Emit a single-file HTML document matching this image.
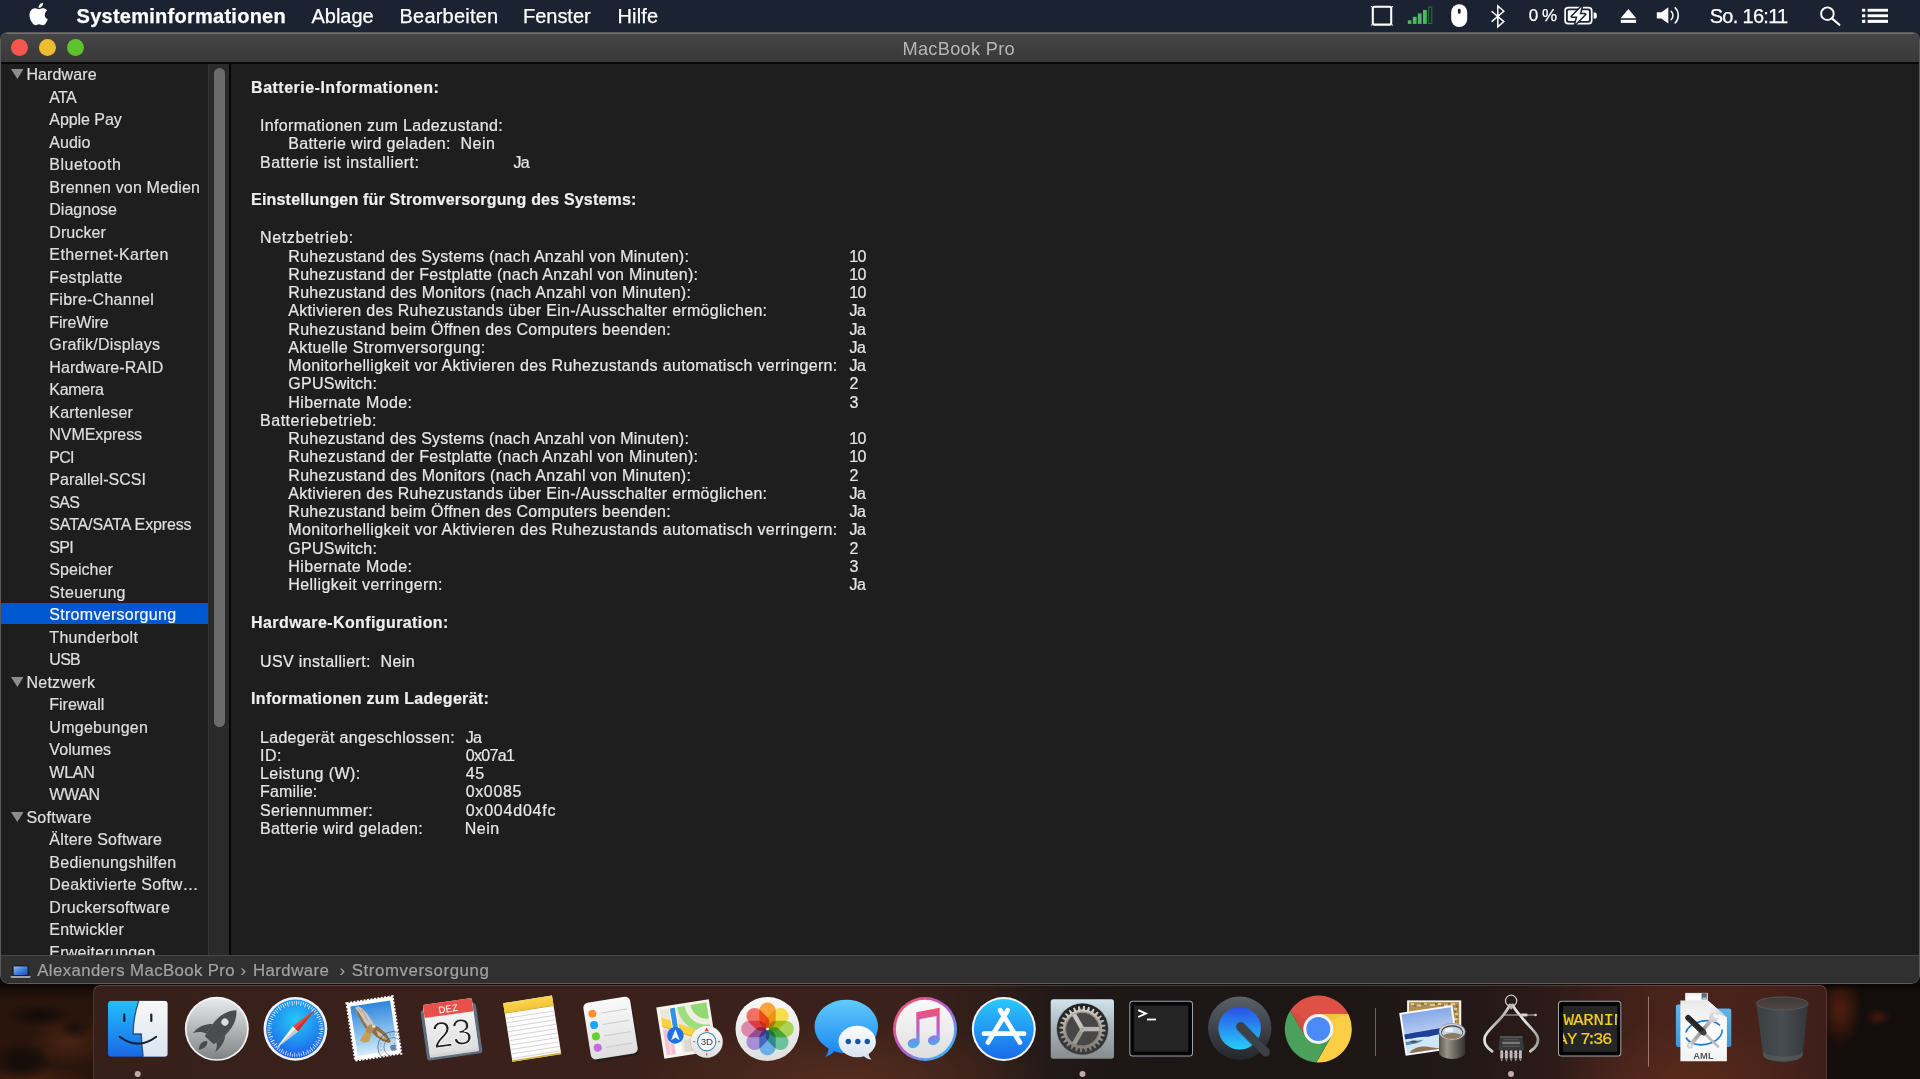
<!DOCTYPE html><html><head><meta charset="utf-8"><title>Systeminformationen</title><style>
*{margin:0;padding:0;box-sizing:border-box}
html,body{width:1920px;height:1079px;overflow:hidden;background:#140b08;font-family:"Liberation Sans",sans-serif;}
.abs{position:absolute}
.t{position:absolute;white-space:pre;line-height:1;}
#menubar{position:absolute;left:0;top:0;width:1920px;height:33px;background:#1b2231;border-bottom:1px solid #182030}
#menubar .t{color:#fff;-webkit-text-stroke:.25px #fff}
#win{position:absolute;left:1px;top:33px;width:1918px;height:950px;border-radius:7px 7px 8px 8px;background:#1e1e1e;overflow:hidden;box-shadow:0 0 0 1px #5a5a5a}
#titlebar{position:absolute;left:0;top:0;width:100%;height:29px;background:linear-gradient(#464646,#404040 40%,#393939);border-top:1px solid #727272}
#tbline{position:absolute;left:0;top:29px;width:100%;height:2px;background:#070707}
.tl{position:absolute;width:17px;height:17px;border-radius:50%;top:6.400px}
#side{position:absolute;left:0;top:31px;width:207px;height:891px;background:#1e1e1e;overflow:hidden}
#side .t{color:#dedede;-webkit-text-stroke:.22px #dedede}
#track{position:absolute;left:207px;top:31px;width:21px;height:891px;background:#2a2a2a;border-left:1px solid #363636}
#thumb{position:absolute;left:212.800px;top:35px;width:11.200px;height:658.500px;border-radius:6px;background:#6b6b6b}
#divider{position:absolute;left:228px;top:31px;width:2px;height:891px;background:#050505}
#main .t{color:#e6e6e6;-webkit-text-stroke:.22px #e6e6e6}
#status{position:absolute;left:0;top:922px;width:100%;height:28px;background:#303030;border-top:1px solid #474747}
#status .t{color:#a2a2a2;-webkit-text-stroke:.2px #a2a2a2}
#dock{position:absolute;left:93px;top:985px;width:1734px;height:110px;border-radius:7px 7px 0 0;background:radial-gradient(ellipse 210px 60px at 750px 96px,rgba(92,48,30,.75),transparent),radial-gradient(ellipse 130px 60px at 1590px 96px,rgba(98,46,28,.6),transparent),linear-gradient(90deg,#38201a 0,#3b211b 35%,#3a211b 47%,#2e1d19 52%,#211917 55.500%,#1d1716 59%,#1c1615 70%,#211817 78%,#2c1b18 84%,#40201a 88%,#4a241a 91.500%,#47221a 96%,#3e1f1a 100%);box-shadow:inset 0 1px 0 rgba(255,255,255,.16),inset 1px 0 0 rgba(255,255,255,.1),inset -1px 0 0 rgba(255,255,255,.1)}
</style></head><body>
<div class="abs" id="wpl" style="left:0;top:983px;width:94px;height:96px;background:linear-gradient(#0b0604 0,rgba(11,6,4,0) 16px),radial-gradient(ellipse 34px 12px at 38px 32px,#120a07,transparent),radial-gradient(ellipse 30px 20px at 22px 78px,#160d09 30%,transparent),radial-gradient(ellipse 18px 12px at 75px 45px,#1a0f0a,transparent),radial-gradient(ellipse 40px 26px at 68px 58px,#4a2413,transparent),radial-gradient(ellipse 60px 14px at 30px 96px,#47210f,transparent),#29150c"></div>
<div class="abs" id="wpr" style="left:1826px;top:983px;width:94px;height:96px;background:linear-gradient(#080504 0,rgba(8,5,4,0) 8px),radial-gradient(ellipse 22px 38px at 14px 26px,#4a1c0e 15%,transparent),radial-gradient(ellipse 14px 9px at 52px 34px,#40190c,transparent),#130d0b"></div>
<div class="abs" style="left:0;top:0;width:1920px;height:46px;background:#1b2231"></div>
<div id="menubar">
<div class="t" style="left:76.60px;top:6.00px;font-size:20px;letter-spacing:0.257px;font-weight:700;">Systeminformationen</div>
<div class="t" style="left:311.50px;top:6.00px;font-size:20px;letter-spacing:-0.030px;">Ablage</div>
<div class="t" style="left:399.50px;top:6.00px;font-size:20px;letter-spacing:0.209px;">Bearbeiten</div>
<div class="t" style="left:523.00px;top:6.00px;font-size:20px;letter-spacing:-0.024px;">Fenster</div>
<div class="t" style="left:617.50px;top:6.00px;font-size:20px;letter-spacing:0.153px;">Hilfe</div>
<div class="t" style="left:1528.70px;top:7.00px;font-size:17px;letter-spacing:-0.489px;">0 %</div>
<div class="t" style="left:1709.70px;top:6.00px;font-size:20px;letter-spacing:-0.700px;">So. 16:11</div>
<svg class="abs" style="left:0;top:0" width="1920" height="32" viewBox="0 0 1920 32">
<g transform="translate(27.46,2.8) scale(0.933)"><path fill="#fff" d="M12.152 6.896c-.948 0-2.415-1.078-3.96-1.04-2.04.027-3.91 1.183-4.961 3.014-2.117 3.675-.546 9.103 1.519 12.09 1.013 1.454 2.208 3.09 3.792 3.039 1.52-.065 2.09-.987 3.935-.987 1.831 0 2.35.987 3.96.948 1.637-.026 2.676-1.48 3.676-2.948 1.156-1.688 1.636-3.325 1.662-3.415-.039-.013-3.182-1.221-3.22-4.857-.026-3.04 2.48-4.494 2.597-4.559-1.429-2.09-3.623-2.324-4.39-2.376-2-.156-3.675 1.09-4.61 1.09zM15.53 3.83c.843-1.012 1.4-2.427 1.245-3.83-1.207.052-2.662.805-3.532 1.818-.78.896-1.454 2.338-1.273 3.714 1.338.104 2.715-.688 3.559-1.701"/></g>
<!-- display square -->
<rect x="1372.8" y="6.8" width="18.4" height="17.8" rx="1.5" fill="none" stroke="#fff" stroke-width="2.1"/>
<path d="M1371.6 6v1.2M1392.4 6v1.2M1371.6 24.4v1.2M1392.4 24.4v1.2" stroke="#fff" stroke-width="1.4"/>
<!-- signal bars -->
<g fill="#4cb866"><rect x="1407.8" y="20.3" width="3.6" height="3.6"/><rect x="1412.8" y="16.8" width="3.8" height="7.1"/><rect x="1417.8" y="13.4" width="3.8" height="10.5"/><rect x="1423" y="9.9" width="3.8" height="14"/></g>
<rect x="1428.7" y="7" width="3.1" height="16.5" fill="none" stroke="#2f7a45" stroke-width="0.9"/>
<!-- mouse -->
<rect x="1451.2" y="4.2" width="16" height="22.8" rx="8" fill="#fff"/>
<rect x="1457.9" y="8.8" width="2.7" height="5" rx="1.2" fill="#1b2130"/>
<!-- bluetooth -->
<path d="M1491.6 11.2L1503.8 21.6L1497.8 26.8V5.9L1503.8 11.2L1491.6 21.6" fill="none" stroke="#fff" stroke-width="1.5" stroke-linejoin="miter"/>
<!-- battery -->
<rect x="1565.1" y="7.6" width="26.6" height="16" rx="3.2" fill="none" stroke="#fff" stroke-width="1.7"/>
<path d="M1593.6 12.4h1.2a2 2 0 0 1 2 2v2.4a2 2 0 0 1-2 2h-1.2z" fill="#fff"/>
<rect x="1567.8" y="10.3" width="21.2" height="10.6" rx="1.2" fill="#fff"/>
<path d="M1581.600 6.800L1572 16.600h5.400L1575.400 24L1585 14.300h-5.400z" fill="#fff" stroke="#1b2231" stroke-width="3" stroke-linejoin="round"/>
<path d="M1581.600 6.800L1572 16.600h5.400L1575.400 24L1585 14.300h-5.400z" fill="#fff"/>
<!-- eject -->
<path d="M1628.4 9L1636.2 18.2H1620.6z" fill="#fff"/><rect x="1620.8" y="19.8" width="15.3" height="3.1" fill="#fff"/>
<!-- speaker -->
<path d="M1656.8 12.2h4.6l6.9-5v16.4l-6.9-5h-4.6z" fill="#fff"/>
<path d="M1671.2 11.2a6 6 0 0 1 0 8.4" fill="none" stroke="#fff" stroke-width="1.5" stroke-linecap="round"/>
<path d="M1675.2 7.8a11 11 0 0 1 0 15.2" fill="none" stroke="#fff" stroke-width="1.5" stroke-linecap="round"/>
<!-- search -->
<circle cx="1827.4" cy="13.7" r="6.3" fill="none" stroke="#fff" stroke-width="1.9"/><path d="M1831.9 18.4L1839.4 24.8" stroke="#fff" stroke-width="2.1" stroke-linecap="round"/>
<!-- list -->
<g fill="#fff"><rect x="1862" y="8.8" width="3.3" height="2.9"/><rect x="1867.6" y="8.8" width="20.4" height="2.9"/><rect x="1862" y="14.3" width="3.3" height="2.9"/><rect x="1867.6" y="14.3" width="20.4" height="2.9"/><rect x="1862" y="19.8" width="3.3" height="3.1"/><rect x="1867.6" y="19.8" width="20.4" height="3.1"/></g>
</svg>

</div>
<div id="win">
<div id="titlebar"></div><div id="tbline"></div>
<div class="tl" style="left:10px;background:#f5564f"></div>
<div class="tl" style="left:38px;background:#ebbd30"></div>
<div class="tl" style="left:66px;background:#5ec22f"></div>
<div class="t" style="left:901.50px;top:7.00px;font-size:18.2px;letter-spacing:0.295px;color:#b6b6b6;">MacBook Pro</div>
<div id="side">
<svg class="abs" style="left:9.60px;top:5.20px" width="12.6" height="10" viewBox="0 0 12.6 10"><path d="M0 0H12.6L6.3 10Z" fill="#8c8c8c"/></svg>
<div class="t" style="left:25.40px;top:3.00px;font-size:16px;letter-spacing:0.120px;">Hardware</div>
<div class="t" style="left:48.30px;top:26.00px;font-size:16px;letter-spacing:-0.700px;">ATA</div>
<div class="t" style="left:48.30px;top:48.00px;font-size:16px;letter-spacing:-0.055px;">Apple Pay</div>
<div class="t" style="left:48.30px;top:71.00px;font-size:16px;letter-spacing:0.019px;">Audio</div>
<div class="t" style="left:48.30px;top:93.00px;font-size:16px;letter-spacing:0.486px;">Bluetooth</div>
<div class="t" style="left:48.30px;top:116.00px;font-size:16px;letter-spacing:0.179px;">Brennen von Medien</div>
<div class="t" style="left:48.30px;top:138.00px;font-size:16px;letter-spacing:0.014px;">Diagnose</div>
<div class="t" style="left:48.30px;top:161.00px;font-size:16px;letter-spacing:0.087px;">Drucker</div>
<div class="t" style="left:48.30px;top:183.00px;font-size:16px;letter-spacing:0.432px;">Ethernet-Karten</div>
<div class="t" style="left:48.30px;top:206.00px;font-size:16px;letter-spacing:0.327px;">Festplatte</div>
<div class="t" style="left:48.30px;top:228.00px;font-size:16px;letter-spacing:0.256px;">Fibre-Channel</div>
<div class="t" style="left:48.30px;top:251.00px;font-size:16px;letter-spacing:-0.163px;">FireWire</div>
<div class="t" style="left:48.30px;top:273.00px;font-size:16px;letter-spacing:0.216px;">Grafik/Displays</div>
<div class="t" style="left:48.30px;top:296.00px;font-size:16px;letter-spacing:0.087px;">Hardware-RAID</div>
<div class="t" style="left:48.30px;top:318.00px;font-size:16px;letter-spacing:-0.285px;">Kamera</div>
<div class="t" style="left:48.30px;top:341.00px;font-size:16px;letter-spacing:0.171px;">Kartenleser</div>
<div class="t" style="left:48.30px;top:363.00px;font-size:16px;letter-spacing:-0.061px;">NVMExpress</div>
<div class="t" style="left:48.30px;top:386.00px;font-size:16px;letter-spacing:-0.700px;">PCI</div>
<div class="t" style="left:48.30px;top:408.00px;font-size:16px;letter-spacing:0.060px;">Parallel-SCSI</div>
<div class="t" style="left:48.30px;top:431.00px;font-size:16px;letter-spacing:-0.700px;">SAS</div>
<div class="t" style="left:48.30px;top:453.00px;font-size:16px;letter-spacing:-0.151px;">SATA/SATA Express</div>
<div class="t" style="left:48.30px;top:476.00px;font-size:16px;letter-spacing:-0.672px;">SPI</div>
<div class="t" style="left:48.30px;top:498.00px;font-size:16px;letter-spacing:0.054px;">Speicher</div>
<div class="t" style="left:48.30px;top:521.00px;font-size:16px;letter-spacing:0.295px;">Steuerung</div>
<div class="abs" style="left:0;top:539px;width:207px;height:21px;background:#0058d0"></div>
<div class="t" style="left:48.30px;top:543.00px;font-size:16px;letter-spacing:0.291px;color:#fff;">Stromversorgung</div>
<div class="t" style="left:48.30px;top:566.00px;font-size:16px;letter-spacing:0.325px;">Thunderbolt</div>
<div class="t" style="left:48.30px;top:588.00px;font-size:16px;letter-spacing:-0.700px;">USB</div>
<svg class="abs" style="left:9.60px;top:612.70px" width="12.6" height="10" viewBox="0 0 12.6 10"><path d="M0 0H12.6L6.3 10Z" fill="#8c8c8c"/></svg>
<div class="t" style="left:25.40px;top:611.00px;font-size:16px;letter-spacing:0.274px;">Netzwerk</div>
<div class="t" style="left:48.30px;top:633.00px;font-size:16px;letter-spacing:-0.009px;">Firewall</div>
<div class="t" style="left:48.30px;top:656.00px;font-size:16px;letter-spacing:0.281px;">Umgebungen</div>
<div class="t" style="left:48.30px;top:678.00px;font-size:16px;letter-spacing:0.072px;">Volumes</div>
<div class="t" style="left:48.30px;top:701.00px;font-size:16px;letter-spacing:-0.224px;">WLAN</div>
<div class="t" style="left:48.30px;top:723.00px;font-size:16px;letter-spacing:-0.360px;">WWAN</div>
<svg class="abs" style="left:9.60px;top:747.70px" width="12.6" height="10" viewBox="0 0 12.6 10"><path d="M0 0H12.6L6.3 10Z" fill="#8c8c8c"/></svg>
<div class="t" style="left:25.40px;top:746.00px;font-size:16px;letter-spacing:0.280px;">Software</div>
<div class="t" style="left:48.30px;top:768.00px;font-size:16px;letter-spacing:0.237px;">Ältere Software</div>
<div class="t" style="left:48.30px;top:791.00px;font-size:16px;letter-spacing:0.269px;">Bedienungshilfen</div>
<div class="t" style="left:48.30px;top:813.00px;font-size:16px;letter-spacing:0.242px;">Deaktivierte Softw…</div>
<div class="t" style="left:48.30px;top:836.00px;font-size:16px;letter-spacing:0.294px;">Druckersoftware</div>
<div class="t" style="left:48.30px;top:858.00px;font-size:16px;letter-spacing:0.169px;">Entwickler</div>
<div class="t" style="left:48.30px;top:881.00px;font-size:16px;letter-spacing:0.252px;">Erweiterungen</div>
</div>
<div id="track"></div><div id="thumb"></div><div id="divider"></div>
<div id="main">
<div class="t" style="left:250.10px;top:47.00px;font-size:16px;letter-spacing:0.492px;font-weight:700;color:#f0f0f0;">Batterie-Informationen:</div>
<div class="t" style="left:259.00px;top:85.00px;font-size:16px;letter-spacing:0.333px;">Informationen zum Ladezustand:</div>
<div class="t" style="left:287.30px;top:103.00px;font-size:16px;letter-spacing:0.352px;">Batterie wird geladen:</div>
<div class="t" style="left:459.50px;top:103.00px;font-size:16px;letter-spacing:0.497px;">Nein</div>
<div class="t" style="left:259.00px;top:122.00px;font-size:16px;letter-spacing:0.472px;">Batterie ist installiert:</div>
<div class="t" style="left:512.50px;top:122.00px;font-size:16px;letter-spacing:-0.700px;">Ja</div>
<div class="t" style="left:250.10px;top:159.00px;font-size:16px;letter-spacing:0.184px;font-weight:700;color:#f0f0f0;">Einstellungen für Stromversorgung des Systems:</div>
<div class="t" style="left:259.00px;top:197.00px;font-size:16px;letter-spacing:0.635px;">Netzbetrieb:</div>
<div class="t" style="left:287.30px;top:216.00px;font-size:16px;letter-spacing:0.243px;">Ruhezustand des Systems (nach Anzahl von Minuten):</div>
<div class="t" style="left:848.30px;top:216.00px;font-size:16px;letter-spacing:-0.700px;">10</div>
<div class="t" style="left:287.30px;top:234.00px;font-size:16px;letter-spacing:0.284px;">Ruhezustand der Festplatte (nach Anzahl von Minuten):</div>
<div class="t" style="left:848.30px;top:234.00px;font-size:16px;letter-spacing:-0.700px;">10</div>
<div class="t" style="left:287.30px;top:252.00px;font-size:16px;letter-spacing:0.278px;">Ruhezustand des Monitors (nach Anzahl von Minuten):</div>
<div class="t" style="left:848.30px;top:252.00px;font-size:16px;letter-spacing:-0.700px;">10</div>
<div class="t" style="left:287.30px;top:270.00px;font-size:16px;letter-spacing:0.296px;">Aktivieren des Ruhezustands über Ein-/Ausschalter ermöglichen:</div>
<div class="t" style="left:848.60px;top:270.00px;font-size:16px;letter-spacing:-0.700px;">Ja</div>
<div class="t" style="left:287.30px;top:289.00px;font-size:16px;letter-spacing:0.283px;">Ruhezustand beim Öffnen des Computers beenden:</div>
<div class="t" style="left:848.60px;top:289.00px;font-size:16px;letter-spacing:-0.700px;">Ja</div>
<div class="t" style="left:287.30px;top:307.00px;font-size:16px;letter-spacing:0.346px;">Aktuelle Stromversorgung:</div>
<div class="t" style="left:848.60px;top:307.00px;font-size:16px;letter-spacing:-0.700px;">Ja</div>
<div class="t" style="left:287.30px;top:325.00px;font-size:16px;letter-spacing:0.337px;">Monitorhelligkeit vor Aktivieren des Ruhezustands automatisch verringern:</div>
<div class="t" style="left:848.60px;top:325.00px;font-size:16px;letter-spacing:-0.700px;">Ja</div>
<div class="t" style="left:287.30px;top:343.00px;font-size:16px;letter-spacing:0.256px;">GPUSwitch:</div>
<div class="t" style="left:848.60px;top:343.00px;font-size:16px;letter-spacing:0.250px;">2</div>
<div class="t" style="left:287.30px;top:362.00px;font-size:16px;letter-spacing:0.383px;">Hibernate Mode:</div>
<div class="t" style="left:848.60px;top:362.00px;font-size:16px;letter-spacing:0.250px;">3</div>
<div class="t" style="left:259.00px;top:380.00px;font-size:16px;letter-spacing:0.529px;">Batteriebetrieb:</div>
<div class="t" style="left:287.30px;top:398.00px;font-size:16px;letter-spacing:0.243px;">Ruhezustand des Systems (nach Anzahl von Minuten):</div>
<div class="t" style="left:848.30px;top:398.00px;font-size:16px;letter-spacing:-0.700px;">10</div>
<div class="t" style="left:287.30px;top:416.00px;font-size:16px;letter-spacing:0.284px;">Ruhezustand der Festplatte (nach Anzahl von Minuten):</div>
<div class="t" style="left:848.30px;top:416.00px;font-size:16px;letter-spacing:-0.700px;">10</div>
<div class="t" style="left:287.30px;top:435.00px;font-size:16px;letter-spacing:0.278px;">Ruhezustand des Monitors (nach Anzahl von Minuten):</div>
<div class="t" style="left:848.60px;top:435.00px;font-size:16px;letter-spacing:0.250px;">2</div>
<div class="t" style="left:287.30px;top:453.00px;font-size:16px;letter-spacing:0.296px;">Aktivieren des Ruhezustands über Ein-/Ausschalter ermöglichen:</div>
<div class="t" style="left:848.60px;top:453.00px;font-size:16px;letter-spacing:-0.700px;">Ja</div>
<div class="t" style="left:287.30px;top:471.00px;font-size:16px;letter-spacing:0.283px;">Ruhezustand beim Öffnen des Computers beenden:</div>
<div class="t" style="left:848.60px;top:471.00px;font-size:16px;letter-spacing:-0.700px;">Ja</div>
<div class="t" style="left:287.30px;top:489.00px;font-size:16px;letter-spacing:0.337px;">Monitorhelligkeit vor Aktivieren des Ruhezustands automatisch verringern:</div>
<div class="t" style="left:848.60px;top:489.00px;font-size:16px;letter-spacing:-0.700px;">Ja</div>
<div class="t" style="left:287.30px;top:508.00px;font-size:16px;letter-spacing:0.256px;">GPUSwitch:</div>
<div class="t" style="left:848.60px;top:508.00px;font-size:16px;letter-spacing:0.250px;">2</div>
<div class="t" style="left:287.30px;top:526.00px;font-size:16px;letter-spacing:0.383px;">Hibernate Mode:</div>
<div class="t" style="left:848.60px;top:526.00px;font-size:16px;letter-spacing:0.250px;">3</div>
<div class="t" style="left:287.30px;top:544.00px;font-size:16px;letter-spacing:0.396px;">Helligkeit verringern:</div>
<div class="t" style="left:848.60px;top:544.00px;font-size:16px;letter-spacing:-0.700px;">Ja</div>
<div class="t" style="left:250.10px;top:582.00px;font-size:16px;letter-spacing:0.399px;font-weight:700;color:#f0f0f0;">Hardware-Konfiguration:</div>
<div class="t" style="left:259.00px;top:621.00px;font-size:16px;letter-spacing:0.368px;">USV installiert:</div>
<div class="t" style="left:379.40px;top:621.00px;font-size:16px;letter-spacing:0.447px;">Nein</div>
<div class="t" style="left:250.10px;top:658.00px;font-size:16px;letter-spacing:0.310px;font-weight:700;color:#f0f0f0;">Informationen zum Ladegerät:</div>
<div class="t" style="left:259.00px;top:697.00px;font-size:16px;letter-spacing:0.304px;">Ladegerät angeschlossen:</div>
<div class="t" style="left:464.70px;top:697.00px;font-size:16px;letter-spacing:-0.700px;">Ja</div>
<div class="t" style="left:259.00px;top:715.00px;font-size:16px;letter-spacing:0.500px;">ID:</div>
<div class="t" style="left:464.70px;top:715.00px;font-size:16px;letter-spacing:-0.659px;">0x07a1</div>
<div class="t" style="left:259.00px;top:733.00px;font-size:16px;letter-spacing:0.421px;">Leistung (W):</div>
<div class="t" style="left:464.70px;top:733.00px;font-size:16px;letter-spacing:0.652px;">45</div>
<div class="t" style="left:259.00px;top:751.00px;font-size:16px;letter-spacing:0.170px;">Familie:</div>
<div class="t" style="left:464.70px;top:751.00px;font-size:16px;letter-spacing:0.641px;">0x0085</div>
<div class="t" style="left:259.00px;top:770.00px;font-size:16px;letter-spacing:0.277px;">Seriennummer:</div>
<div class="t" style="left:464.70px;top:770.00px;font-size:16px;letter-spacing:0.785px;">0x004d04fc</div>
<div class="t" style="left:259.00px;top:788.00px;font-size:16px;letter-spacing:0.378px;">Batterie wird geladen:</div>
<div class="t" style="left:463.70px;top:788.00px;font-size:16px;letter-spacing:0.514px;">Nein</div>
</div>
<div id="status">
<svg class="abs" style="left:9px;top:9px" width="22" height="14" viewBox="0 0 22 14"><defs><linearGradient id="lg1" x1="0" y1="0" x2="1" y2="1"><stop offset="0" stop-color="#8fc0f5"/><stop offset=".5" stop-color="#3f7fe0"/><stop offset="1" stop-color="#1e4fb0"/></linearGradient></defs><rect x="2.6" y="0.6" width="16" height="10.4" rx="0.8" fill="#111"/><rect x="3.6" y="1.4" width="14" height="8.8" fill="url(#lg1)"/><path d="M0.4 11.2h20.4l-0.8 1.6h-18.8z" fill="#c9c9c9"/></svg>

<div class="t" style="left:36.30px;top:7.00px;font-size:16.8px;letter-spacing:0.380px;">Alexanders MacBook Pro</div>
<div class="t" style="left:239.50px;top:7.00px;font-size:16.8px;letter-spacing:0.250px;">›</div>
<div class="t" style="left:252.00px;top:7.00px;font-size:16.8px;letter-spacing:0.441px;">Hardware</div>
<div class="t" style="left:338.50px;top:7.00px;font-size:16.8px;letter-spacing:0.250px;">›</div>
<div class="t" style="left:350.80px;top:7.00px;font-size:16.8px;letter-spacing:0.587px;">Stromversorgung</div>
</div>
</div>
<div id="dock"></div>
<svg class="abs" style="left:0;top:984px" width="1920" height="95" viewBox="0 984 1920 95">
<defs>
<linearGradient id="fb" x1="0" y1="0" x2="0" y2="1"><stop offset="0" stop-color="#22c0fa"/><stop offset="1" stop-color="#1a68e8"/></linearGradient>
<linearGradient id="fw" x1="0" y1="0" x2="0" y2="1"><stop offset="0" stop-color="#f8f8f8"/><stop offset="1" stop-color="#d9e4f1"/></linearGradient>
<linearGradient id="lp" x1="0" y1="0" x2="0" y2="1"><stop offset="0" stop-color="#e6eaeb"/><stop offset="1" stop-color="#7f8384"/></linearGradient>
<linearGradient id="sf" x1="0" y1="0" x2="0" y2="1"><stop offset="0" stop-color="#1cc6f8"/><stop offset="1" stop-color="#1b5fe9"/></linearGradient>
<linearGradient id="sky" x1="0" y1="0" x2="0" y2="1"><stop offset="0" stop-color="#2f86dc"/><stop offset=".6" stop-color="#8cc3ef"/><stop offset="1" stop-color="#d7ebf8"/></linearGradient>
<linearGradient id="ny" x1="0" y1="0" x2="0" y2="1"><stop offset="0" stop-color="#fbd651"/><stop offset="1" stop-color="#f4c336"/></linearGradient>
<linearGradient id="wh" x1="0" y1="0" x2="0" y2="1"><stop offset="0" stop-color="#fafafa"/><stop offset="1" stop-color="#dedede"/></linearGradient>
<linearGradient id="msg" x1="0" y1="0" x2="0" y2="1"><stop offset="0" stop-color="#5fcbfb"/><stop offset="1" stop-color="#1a83f3"/></linearGradient>
<linearGradient id="msw" x1="0" y1="0" x2="0" y2="1"><stop offset="0" stop-color="#ffffff"/><stop offset="1" stop-color="#d4e2f0"/></linearGradient>
<linearGradient id="itr" x1="0.1" y1="0.1" x2="0.9" y2="0.9"><stop offset="0" stop-color="#f5546a"/><stop offset=".5" stop-color="#b25fd6"/><stop offset="1" stop-color="#2fbdf6"/></linearGradient>
<linearGradient id="itn" gradientUnits="userSpaceOnUse" x1="925" y1="1008" x2="925" y2="1048"><stop offset="0" stop-color="#f4506c"/><stop offset=".55" stop-color="#b660d8"/><stop offset="1" stop-color="#3db4f5"/></linearGradient>
<linearGradient id="as" x1="0" y1="0" x2="0" y2="1"><stop offset="0" stop-color="#2bc8fb"/><stop offset="1" stop-color="#1a6aea"/></linearGradient>
<linearGradient id="sp" x1="0" y1="0" x2="0" y2="1"><stop offset="0" stop-color="#d2e4ec"/><stop offset=".45" stop-color="#aab6bc"/><stop offset="1" stop-color="#888c8e"/></linearGradient>
<linearGradient id="gear" gradientUnits="userSpaceOnUse" x1="0" y1="1006" x2="0" y2="1052"><stop offset="0" stop-color="#d6d2cc"/><stop offset="1" stop-color="#7b7771"/></linearGradient><linearGradient id="spd" x1="0" y1="0" x2="0" y2="1"><stop offset="0" stop-color="#1f2123"/><stop offset="1" stop-color="#3a3c3e"/></linearGradient>
<linearGradient id="qt" x1="0" y1="0" x2="0" y2="1"><stop offset="0" stop-color="#5a6068"/><stop offset="1" stop-color="#23262a"/></linearGradient>
<linearGradient id="qtb" x1="0" y1="0" x2="0" y2="1"><stop offset="0" stop-color="#2950e6"/><stop offset="1" stop-color="#27cdfb"/></linearGradient>
<linearGradient id="sea" x1="0" y1="0" x2="0" y2="1"><stop offset="0" stop-color="#6f9fe0"/><stop offset=".42" stop-color="#b9d2f0"/><stop offset=".5" stop-color="#1f3f8a"/><stop offset=".75" stop-color="#6d9fc8"/><stop offset="1" stop-color="#7a6650"/></linearGradient>
<linearGradient id="silver" x1="0" y1="0" x2="1" y2="0"><stop offset="0" stop-color="#8c8c8c"/><stop offset=".35" stop-color="#e8e8e8"/><stop offset="1" stop-color="#6a6a6a"/></linearGradient>
<linearGradient id="doc" x1="0" y1="0" x2="0" y2="1"><stop offset="0" stop-color="#e9e9e9"/><stop offset=".5" stop-color="#ffffff"/><stop offset="1" stop-color="#f2f2f2"/></linearGradient>
<linearGradient id="fold" x1="0" y1="0" x2="0" y2="1"><stop offset="0" stop-color="#62b6ea"/><stop offset="1" stop-color="#3d97d6"/></linearGradient>
<linearGradient id="tr" x1="0" y1="0" x2="1" y2="0"><stop offset="0" stop-color="#3a3f42"/><stop offset=".5" stop-color="#484d51"/><stop offset="1" stop-color="#33373a"/></linearGradient>
<radialGradient id="sfr" cx=".5" cy=".35" r=".7"><stop offset="0" stop-color="#25c8f3"/><stop offset=".55" stop-color="#1f8df0"/><stop offset="1" stop-color="#1c55ea"/></radialGradient><linearGradient id="sea2" x1="0" y1="0" x2="0" y2="1"><stop offset="0" stop-color="#86a9e8"/><stop offset=".5" stop-color="#b4caee"/><stop offset=".52" stop-color="#2a4c9e"/><stop offset="1" stop-color="#cfe8f4"/></linearGradient><linearGradient id="loupe" x1="0" y1="0" x2="1" y2="0"><stop offset="0" stop-color="#5a564e"/><stop offset=".3" stop-color="#9a958a"/><stop offset=".6" stop-color="#6d685f"/><stop offset="1" stop-color="#34312c"/></linearGradient><linearGradient id="cal" gradientUnits="userSpaceOnUse" x1="1484" y1="0" x2="1539" y2="0"><stop offset="0" stop-color="#e6e6e6"/><stop offset=".3" stop-color="#a8a8a8"/><stop offset=".5" stop-color="#dcdcdc"/><stop offset=".75" stop-color="#e6e6e6"/><stop offset="1" stop-color="#9a9a9a"/></linearGradient><linearGradient id="curl" x1="0" y1="0" x2="1" y2="1"><stop offset="0" stop-color="#ffffff"/><stop offset=".6" stop-color="#e2e2e2"/><stop offset="1" stop-color="#b9b9b9"/></linearGradient><linearGradient id="wr" gradientUnits="userSpaceOnUse" x1="1690" y1="1045" x2="1715" y2="1016"><stop offset="0" stop-color="#c9c9c9"/><stop offset=".5" stop-color="#8e8e8e"/><stop offset="1" stop-color="#e0e0e0"/></linearGradient><linearGradient id="trin" x1="0" y1="0" x2="0" y2="1"><stop offset="0" stop-color="#3d3837"/><stop offset="1" stop-color="#524847"/></linearGradient><clipPath id="fclip"><rect x="108" y="1000.7" width="59.7" height="56.1" rx="3.5"/></clipPath>
</defs>
<!-- running dots -->
<g fill="#c4aaa5"><circle cx="137.7" cy="1074" r="3"/><circle cx="1082.5" cy="1074" r="3"/><circle cx="1511" cy="1074" r="3"/></g>
<!-- separators -->
<rect x="1375" y="1008" width="1" height="48" fill="#8a736d" opacity=".8"/>
<rect x="1648" y="996.5" width="1" height="70" fill="#b08a80" opacity=".8"/>
<!-- Finder -->
<g clip-path="url(#fclip)"><rect x="108" y="1000.7" width="59.7" height="56.1" fill="url(#fb)"/>
<path d="M138.8 1000.7C135 1012 133.2 1024 133.2 1034H141.3C141.5 1042 142.3 1050 143.2 1056.8H167.7V1000.7Z" fill="url(#fw)"/>
<path d="M138.8 1000.7C135 1012 133.2 1024 133.2 1034H141.3C141.5 1042 142.3 1050 143.2 1056.8" fill="none" stroke="#1b2b44" stroke-width="1.3" opacity=".75"/></g>
<path d="M124.3 1014.6V1021M151.3 1014.6V1021" stroke="#15202e" stroke-width="2.2" stroke-linecap="round"/>
<path d="M119.7 1036.8Q138 1050.5 156.2 1036.8" fill="none" stroke="#15202e" stroke-width="2" stroke-linecap="round"/>
<!-- Launchpad -->
<circle cx="216.85" cy="1028.85" r="32" fill="#f0f3f3"/><circle cx="216.85" cy="1029" r="30.2" fill="url(#lp)"/>
<g transform="translate(222.3 1025.8) rotate(42)" fill="#4a4d4f"><path d="M0 -21C5.500 -16 8.500 -8 8.500 0C8.500 7 7.500 13 6 19.500H-6C-7.500 13 -8.500 7 -8.500 0C-8.500 -8 -5.500 -16 0 -21Z"/><path d="M-8.300 5C-13 9 -17.500 15 -17 25C-14 20 -10.500 17.500 -6.800 16.500Z"/><path d="M8.300 5C12 9 13.500 15 12.500 24.500C11 20 9 17.500 6.800 16.500Z"/><path d="M-1 21.500C2.500 24 2.500 29 -1.500 33.500C-5 29 -5 24 -1 21.500Z"/><circle cx="-0.500" cy="-4.500" r="3.600" fill="#d9dddd"/></g>
<!-- Safari -->
<circle cx="295.4" cy="1028.85" r="31.9" fill="#f1f2f3"/><circle cx="295.4" cy="1028.85" r="29.300" fill="url(#sfr)"/>
<circle cx="295.4" cy="1028.85" r="25.800" fill="none" stroke="#fff" stroke-width="4.400" stroke-dasharray="0.800 3.703" opacity=".92"/>
<circle cx="295.4" cy="1028.85" r="26.600" fill="none" stroke="#fff" stroke-width="2.800" stroke-dasharray="0.800 3.843" stroke-dashoffset="-2.320" opacity=".85"/>
<path d="M315.1 1009.5L298 1031.500L292.800 1026.300Z" fill="#f1453d"/><path d="M276.1 1048.2L298 1031.500L292.800 1026.300Z" fill="#f4f4f4"/><path d="M315.1 1009.5L298 1031.500L295.4 1028.9Z" fill="#c9302b"/><path d="M276.1 1048.2L298 1031.500L295.4 1028.9Z" fill="#c6cacf"/>
<!-- Mail -->
<g transform="rotate(-8.600 373.9 1028.4)"><rect x="350.700" y="999.500" width="46.400" height="57.800" fill="#fff" stroke="#fdfdfd" stroke-width="2.300" stroke-dasharray="2 1.450"/><rect x="353.800" y="1003.300" width="40.300" height="50.100" fill="url(#sky)"/>
<path d="M355 1058.500" fill="none"/>
<g transform="rotate(8.600 373.9 1028.4)">
<path d="M355.200 1007.700L358 1006.300L362 1008.300L366.500 1012.800L370.500 1018.800L373.500 1023.400L371 1028.500L366 1029.500L361 1021.500L357 1014.500Z" fill="#cbc7c0"/>
<path d="M355.200 1007.700L357 1014.500L361 1021.500L366 1029.500L367.500 1027L363 1020L359.500 1013.500Z" fill="#8d7250"/>
<path d="M358.500 1008.500L362 1013M361.500 1009L365 1014.500M360 1015L364 1020M364 1014L368 1020.500M363.500 1021.500L367.500 1025.500" stroke="#9a8666" stroke-width=".7" opacity=".8"/>
<path d="M373.300 1024.500L379 1027.500L386 1033.500L391 1041.500L389 1043L383 1041L376 1036.500L371 1031.500Z" fill="#8e6d40"/>
<path d="M376 1030L382 1034L387.500 1040L383.500 1039L378 1035.500Z" fill="#c4bcae"/>
<path d="M366 1030L360 1040.500L364 1042.800L369.500 1041.200L371.800 1033Z" fill="#c9a058"/>
<ellipse cx="370" cy="1029" rx="3.600" ry="5" transform="rotate(35 370 1029)" fill="#b38d58"/><circle cx="373.800" cy="1026.300" r="1.800" fill="#e6dcc8"/>
</g></g>
<circle cx="393.3" cy="1047" r="15.500" fill="none" stroke="#2a2848" stroke-width="1" opacity=".55"/><circle cx="393.3" cy="1047" r="9.400" fill="none" stroke="#2a2848" stroke-width=".9" opacity=".5"/><circle cx="393.3" cy="1047" r="12.400" fill="none" stroke="#2a2848" stroke-width="2.200" stroke-dasharray=".8 2.400" opacity=".35"/>
<g transform="translate(389.500 1042.800) scale(0.330)" opacity=".6"><path fill="#2f3f78" d="M12.152 6.896c-.948 0-2.415-1.078-3.96-1.040-2.040.027-3.910 1.183-4.961 3.014-2.117 3.675-.546 9.103 1.519 12.090 1.013 1.454 2.208 3.090 3.792 3.039 1.520-.065 2.090-.987 3.935-.987 1.831 0 2.350.987 3.960.948 1.637-.026 2.676-1.480 3.676-2.948 1.156-1.688 1.636-3.325 1.662-3.415-.039-.013-3.182-1.221-3.220-4.857-.026-3.040 2.480-4.494 2.597-4.559-1.429-2.090-3.623-2.324-4.390-2.376-2-.156-3.675 1.090-4.610 1.090zM15.530 3.830c.843-1.012 1.400-2.427 1.245-3.830-1.207.052-2.662.805-3.532 1.818-.780.896-1.454 2.338-1.273 3.714 1.338.104 2.715-.688 3.559-1.701"/></g>
<!-- Calendar -->
<g transform="translate(2 0.500) rotate(-8 450 1028)"><rect x="421.200" y="1006" width="55.800" height="50.500" rx="2.500" fill="#5d6f7e"/><rect x="424.2" y="1001.6" width="49.6" height="52.6" rx="1.5" fill="#d4d4d4"/><rect x="424.4" y="1000.6" width="49.2" height="50.6" rx="1.5" fill="url(#wh)"/><path d="M424.4 1002.1a1.5 1.5 0 0 1 1.5-1.5h46.2a1.5 1.5 0 0 1 1.5 1.5V1013.8H424.4Z" fill="#e8514b"/>
<text x="449" y="1011.3" font-family="Liberation Sans, sans-serif" font-size="9.6" fill="#fff" text-anchor="middle" letter-spacing=".2">DEZ</text>
<text x="449" y="1045.400" font-family="Liberation Sans, sans-serif" font-size="36.500" fill="#222" text-anchor="middle" letter-spacing="-.5" stroke="#fafafa" stroke-width=".9">23</text></g>
<!-- Notes -->
<g transform="rotate(-9 532 1028)"><rect x="507.4" y="999" width="49.4" height="59.2" fill="#fdfdfd"/><rect x="507.4" y="1056.8" width="49.4" height="1.6" fill="#d9b13a"/><rect x="507.4" y="999" width="49.4" height="9.8" fill="url(#ny)"/><rect x="507.4" y="1008.6" width="49.4" height="1" fill="#d6a92c"/>
<path d="M507.4 1014.5h49.4M507.4 1019h49.4M507.4 1023.5h49.4M507.4 1028h49.4M507.4 1032.5h49.4M507.4 1037h49.4M507.4 1041.500h49.400M507.400 1046h49.400M507.400 1050.500h49.400M507.400 1055h49.400" stroke="#cfcfcf" stroke-width=".8"/></g>
<!-- Reminders -->
<g transform="rotate(-9 610.500 1028)"><rect x="587.8" y="1001.6" width="47.4" height="57.4" rx="5" fill="#1d1d1d" opacity=".7"/><rect x="586.8" y="999.4" width="47.4" height="57.4" rx="5" fill="url(#wh)"/>
<circle cx="594.800" cy="1011" r="4" fill="#f7922f"/><circle cx="594.8" cy="1022.5" r="4" fill="#1ba5f6"/><circle cx="594.8" cy="1034" r="4" fill="#63d22f"/><circle cx="594.8" cy="1045.5" r="4" fill="#c66ce2"/>
<path d="M603 1011.8h27M603 1023.300h27M603 1034.800h27M603 1046.300h27" stroke="#c9c9c9" stroke-width=".9"/></g>
<!-- Maps -->
<g transform="translate(656.250 1007.500) rotate(-9)"><clipPath id="mclip"><rect x="3" y="3" width="47.200" height="45.900"/></clipPath><rect x="0" y="0" width="53.200" height="51.900" fill="#f6f4ef"/><g clip-path="url(#mclip)"><rect x="3" y="3" width="47.200" height="45.900" fill="#ebe7dd"/>
<circle cx="50.200" cy="3" r="29.500" fill="#9ede7c"/><circle cx="50.200" cy="3" r="22" fill="#f1ede4"/><circle cx="50.200" cy="3" r="16" fill="#93d873"/>
<path d="M3 10.500L50.200 35.800V43.500L3 19Z" fill="#fbd13c"/><path d="M3 19L50.200 43.500V44.600L3 20.100Z" fill="#f0a830"/>
<rect x="3" y="23.500" width="9.300" height="26" fill="#f6c2d2"/><rect x="6.500" y="23.500" width="2.200" height="26" fill="#f9d5e0"/>
<rect x="12.300" y="3" width="7" height="46" fill="#fdfdfd"/><rect x="13.300" y="3" width="5" height="30" fill="#3490e6"/>
<rect x="22" y="36.500" width="8.500" height="13" fill="#dedad1"/></g>
<circle cx="14.550" cy="30.550" r="8.300" fill="#1b74e6"/><path d="M14.550 24.500L18.800 35.300L14.550 32.700L10.300 35.300Z" fill="#fff" transform="rotate(9 14.550 30.550)"/></g>
<circle cx="706.700" cy="1042" r="16.400" fill="#70757a" opacity=".45"/><circle cx="706.700" cy="1041.700" r="16" fill="url(#wh)"/><circle cx="706.700" cy="1041.700" r="9.200" fill="#f7f9fb" stroke="#4288b0" stroke-width="1.100"/>
<text x="706.700" y="1045.300" font-family="Liberation Sans, sans-serif" font-size="9.800" fill="#3a3a3a" text-anchor="middle" letter-spacing="-.4">3D</text><path d="M706.700 1027.600L708.900 1031.200H704.500Z" fill="#ea3b2e"/><path d="M693.300 1041.700h2M718.100 1041.700h2M706.700 1053.400v2" stroke="#555" stroke-width=".9"/>
<!-- Photos -->
<circle cx="767.5" cy="1029" r="32" fill="url(#wh)"/>
<g style="isolation:isolate"><rect x="759.300" y="1002.600" width="16.400" height="25.800" rx="8.200" fill="#f99c2c" opacity=".93" style="mix-blend-mode:multiply" transform="rotate(0 767.5 1029)"/><rect x="759.300" y="1002.600" width="16.400" height="25.800" rx="8.200" fill="#f4de3c" opacity=".93" style="mix-blend-mode:multiply" transform="rotate(45 767.5 1029)"/><rect x="759.300" y="1002.600" width="16.400" height="25.800" rx="8.200" fill="#a6d24a" opacity=".93" style="mix-blend-mode:multiply" transform="rotate(90 767.5 1029)"/><rect x="759.300" y="1002.600" width="16.400" height="25.800" rx="8.200" fill="#62bf96" opacity=".93" style="mix-blend-mode:multiply" transform="rotate(135 767.5 1029)"/><rect x="759.300" y="1002.600" width="16.400" height="25.800" rx="8.200" fill="#62abe6" opacity=".93" style="mix-blend-mode:multiply" transform="rotate(180 767.5 1029)"/><rect x="759.300" y="1002.600" width="16.400" height="25.800" rx="8.200" fill="#a088d0" opacity=".93" style="mix-blend-mode:multiply" transform="rotate(225 767.5 1029)"/><rect x="759.300" y="1002.600" width="16.400" height="25.800" rx="8.200" fill="#de80a8" opacity=".93" style="mix-blend-mode:multiply" transform="rotate(270 767.5 1029)"/><rect x="759.300" y="1002.600" width="16.400" height="25.800" rx="8.200" fill="#f26658" opacity=".93" style="mix-blend-mode:multiply" transform="rotate(315 767.5 1029)"/></g><circle cx="767.5" cy="1029" r="1.300" fill="#fff"/>
<!-- Messages -->
<path d="M846.300 999.800C864 999.800 878 1011.800 878 1026.500C878 1041.200 864 1053.200 846.300 1053.200C842 1053.200 838 1052.500 834.300 1051.300C832 1054 828.500 1056.300 825.200 1056.800C827.600 1054 828.800 1050.800 828.600 1048.600C820.300 1043.700 814.600 1035.700 814.600 1026.500C814.600 1011.800 828.600 999.800 846.300 999.800Z" fill="url(#msg)"/>
<path d="M857.200 1025.700C867.500 1025.700 875.900 1032.800 875.900 1041.500C875.900 1046.600 873 1051.100 868.600 1054C868.800 1056 869.800 1058 871.500 1059.600C868.500 1059.300 865.800 1058 864 1056.300C861.900 1056.900 859.600 1057.300 857.200 1057.300C846.900 1057.300 838.500 1050.200 838.500 1041.500C838.500 1032.800 846.900 1025.700 857.200 1025.700Z" fill="url(#msw)"/>
<g fill="#1556a6"><circle cx="848.300" cy="1041.500" r="2.700"/><circle cx="857.800" cy="1041.500" r="2.700"/><circle cx="867.300" cy="1041.500" r="2.700"/></g>
<!-- iTunes -->
<circle cx="925" cy="1029" r="32" fill="url(#itr)"/><circle cx="925" cy="1029" r="29.200" fill="url(#wh)"/>
<g fill="url(#itn)"><path d="M916.300 1012.300L939.700 1007.700V1040H936.500V1015.900L919.500 1019.300V1043H916.300Z"/><ellipse cx="913.600" cy="1043.200" rx="6" ry="4.800" transform="rotate(-18 913.600 1043.200)"/><ellipse cx="933.800" cy="1040.200" rx="6" ry="4.800" transform="rotate(-18 933.800 1040.200)"/></g>
<!-- App Store -->
<circle cx="1003.8" cy="1029" r="32" fill="#f3f5f7"/><circle cx="1003.8" cy="1029" r="30" fill="url(#as)"/>
<g stroke="#fff" stroke-width="4.800" stroke-linecap="round" fill="none"><path d="M1007.700 1010.200L988 1042.500"/><path d="M1000.200 1010.200L1019.900 1042.500"/><path d="M984 1033.700H1024"/></g>
<!-- SysPrefs -->
<rect x="1050.700" y="999.300" width="63.300" height="59.400" rx="2.600" fill="url(#sp)"/>
<circle cx="1082.5" cy="1029.1" r="26.200" fill="#6f7d86" opacity=".6"/><circle cx="1082.5" cy="1029.1" r="25.600" fill="url(#spd)"/>
<path d="M1082.5 1009.5L1083.2 1006.0L1084.9 1006.1L1085.1 1009.7L1086.9 1010.0L1088.3 1006.8L1089.9 1007.2L1089.4 1010.7L1091.0 1011.4L1093.2 1008.6L1094.6 1009.4L1093.3 1012.7L1094.7 1013.8L1097.5 1011.5L1098.7 1012.6L1096.7 1015.6L1097.8 1016.9L1101.0 1015.3L1101.9 1016.6L1099.3 1019.0L1100.2 1020.6L1103.6 1019.7L1104.2 1021.3L1101.1 1023.0L1101.6 1024.7L1105.2 1024.7L1105.4 1026.3L1102.0 1027.3L1102.1 1029.1L1105.6 1029.8L1105.5 1031.5L1101.9 1031.7L1101.6 1033.5L1104.8 1034.9L1104.4 1036.5L1100.9 1036.0L1100.2 1037.6L1103.0 1039.8L1102.2 1041.2L1098.9 1039.9L1097.8 1041.3L1100.1 1044.1L1099.0 1045.3L1096.0 1043.3L1094.7 1044.4L1096.3 1047.6L1095.0 1048.5L1092.6 1045.9L1091.0 1046.8L1091.9 1050.2L1090.3 1050.8L1088.6 1047.7L1086.9 1048.2L1086.9 1051.8L1085.3 1052.0L1084.3 1048.6L1082.5 1048.7L1081.8 1052.2L1080.1 1052.1L1079.9 1048.5L1078.1 1048.2L1076.7 1051.4L1075.1 1051.0L1075.6 1047.5L1074.0 1046.8L1071.8 1049.6L1070.4 1048.8L1071.7 1045.5L1070.3 1044.4L1067.5 1046.7L1066.3 1045.6L1068.3 1042.6L1067.2 1041.3L1064.0 1042.9L1063.1 1041.6L1065.7 1039.2L1064.8 1037.6L1061.4 1038.5L1060.8 1036.9L1063.9 1035.2L1063.4 1033.5L1059.8 1033.5L1059.6 1031.9L1063.0 1030.9L1062.9 1029.1L1059.4 1028.4L1059.5 1026.7L1063.1 1026.5L1063.4 1024.7L1060.2 1023.3L1060.6 1021.7L1064.1 1022.2L1064.8 1020.6L1062.0 1018.4L1062.8 1017.0L1066.1 1018.3L1067.2 1016.9L1064.9 1014.1L1066.0 1012.9L1069.0 1014.9L1070.3 1013.8L1068.7 1010.6L1070.0 1009.7L1072.4 1012.3L1074.0 1011.4L1073.1 1008.0L1074.7 1007.4L1076.4 1010.5L1078.1 1010.0L1078.1 1006.4L1079.7 1006.2L1080.7 1009.6Z" fill="url(#gear)"/><circle cx="1082.5" cy="1029.1" r="16.400" fill="#474747"/><circle cx="1082.5" cy="1029.1" r="17.100" fill="none" stroke="#77736d" stroke-width=".8"/>
<g stroke="url(#gear)" stroke-width="4.400"><path d="M1082.5 1029.1L1099.5 1029.1" stroke="#b9b5af"/><path d="M1082.5 1029.1L1074.0 1014.4" stroke="#c8c4be"/><path d="M1082.5 1029.1L1074.0 1043.8" stroke="#9c9892"/></g><circle cx="1082.5" cy="1029.1" r="2.600" fill="#bdb9b3"/><circle cx="1082.5" cy="1029.1" r="1.200" fill="#8e9aa8"/>
<!-- Terminal -->
<rect x="1129.300" y="1000.700" width="63.700" height="55.800" rx="3.500" fill="#9aa4ad"/><rect x="1130.300" y="1001.700" width="61.700" height="53.800" rx="2.800" fill="#050505"/><rect x="1134" y="1005.600" width="54.300" height="46" fill="#242424"/>
<path d="M1138.200 1010.200L1145.800 1013.600L1138.200 1017" fill="none" stroke="#fff" stroke-width="1.900"/><rect x="1147" y="1018.600" width="9" height="1.800" fill="#fff"/>
<!-- QuickTime -->
<circle cx="1239.700" cy="1028.200" r="31.700" fill="url(#qt)"/><circle cx="1239.700" cy="1028.200" r="21.300" fill="url(#qtb)"/>
<path d="M1240.800 1026.800L1265.500 1052" stroke="#26292c" stroke-width="9.800" stroke-linecap="round" opacity=".5"/>
<path d="M1240.800 1026.800L1265.800 1052.300" stroke="#3d4146" stroke-width="8.400" stroke-linecap="round"/>
<!-- Chrome -->
<path d="M1290.330 1010.560A33.500 33.500 0 0 1 1348.250 1014H1318.300V1029L1305.310 1036.500Z" fill="#de5246"/>
<path d="M1348.250 1014A33.500 33.500 0 0 1 1316.300 1062.440L1331.290 1036.500L1318.300 1029V1014Z" fill="#fcce46"/>
<path d="M1316.300 1062.440A33.500 33.500 0 0 1 1290.330 1010.560L1305.310 1036.500L1318.300 1029L1331.290 1036.500Z" fill="#4ba05c"/>
<path d="M1290.330 1010.560L1305.310 1036.500L1318.300 1029L1300 1016Z" fill="#c9473c" opacity=".5"/>
<path d="M1316.300 1062.440L1331.290 1036.500L1318.300 1029L1322 1050Z" fill="#3f8f50" opacity=".5"/>
<path d="M1348.250 1014H1318.300V1029L1336 1018Z" fill="#e8b83a" opacity=".5"/>
<circle cx="1318.300" cy="1029" r="15" fill="#f4f4f4"/><circle cx="1318.300" cy="1029" r="12" fill="#4c8bf5"/>
<!-- Preview -->
<rect x="1407.100" y="1000.400" width="54.150" height="40" fill="#f6f4ee"/><rect x="1409" y="1002.100" width="50.200" height="37" fill="#b08f4a"/>
<g fill="#e9dcc0" opacity=".75"><rect x="1411" y="1003" width="3" height="2"/><rect x="1417" y="1004.500" width="4" height="2"/><rect x="1424" y="1003" width="3" height="1.500"/><rect x="1430" y="1004" width="5" height="2"/><rect x="1438" y="1003" width="3" height="2"/><rect x="1444" y="1004.500" width="4" height="1.500"/><rect x="1451" y="1003" width="4" height="2"/><rect x="1454" y="1008" width="3" height="2"/><rect x="1455" y="1013" width="3" height="2"/><rect x="1453.500" y="1018" width="4" height="2"/><rect x="1455" y="1023" width="3" height="1.500"/></g>
<g fill="#6b5424" opacity=".6"><rect x="1414" y="1005" width="2" height="1.500"/><rect x="1421" y="1003" width="3" height="1.500"/><rect x="1435" y="1003" width="2" height="2"/><rect x="1441" y="1005" width="3" height="1.500"/><rect x="1448" y="1003" width="2" height="1.500"/><rect x="1456" y="1005.500" width="2" height="2"/><rect x="1454" y="1011" width="2" height="1.500"/><rect x="1456" y="1016" width="2" height="1.500"/><rect x="1454" y="1021" width="2" height="1.500"/></g>
<g transform="translate(1399.200 1012.900) rotate(-8.500)"><rect x="0" y="0" width="53.750" height="43.400" fill="#fcfcfc"/><rect x="2" y="2" width="49.750" height="39.400" fill="url(#sea2)"/>
<path d="M2 22.500C12 21.500 24 21.500 51.750 21V27C40 26 30 29 22 28C14 27.500 8 29 2 28Z" fill="#1f3f96"/><path d="M2 27C8 28 14 26.500 22 27.500C30 28.500 40 25.500 51.750 26.500V41.400H2Z" fill="#cfe8f4"/><path d="M2 30C8 29 14 31 20 30C16 33 8 33.500 2 33Z" fill="#3f6fb0" opacity=".8"/><path d="M4 41.400C8 37 16 35.500 24 38C28 39 32 40 36 41.400Z" fill="#8a6f52"/><path d="M6 30C9 29 12 29.500 14 31C11 32 8 32 6 30Z" fill="#5a4a3a"/></g>
<path d="M1439 1031.700V1052.500A13.100 6.500 0 0 0 1465.200 1052.500V1031.700Z" fill="url(#loupe)"/>
<ellipse cx="1452.100" cy="1031.700" rx="13.100" ry="8.300" fill="#cfd3d6"/><ellipse cx="1452.100" cy="1031.700" rx="13.100" ry="8.300" fill="none" stroke="#8a8d90" stroke-width=".7"/><ellipse cx="1452.100" cy="1032.100" rx="11.200" ry="6.900" fill="#3a3d40"/><ellipse cx="1452.100" cy="1032.600" rx="10.300" ry="6.200" fill="#c4d4e2"/><path d="M1443 1035.500C1447 1032.500 1456 1032 1461.500 1035A10.300 6.200 0 0 1 1443 1035.500Z" fill="#8f7a5e"/><ellipse cx="1449" cy="1030" rx="4.500" ry="2.200" fill="#f2f6fa" opacity=".85"/>
<!-- System Information (calipers + chip) -->
<circle cx="1511.100" cy="1000.800" r="5.600" fill="none" stroke="#c9c9c9" stroke-width="1.300"/>
<path d="M1510 1005C1507 1010 1505 1013 1503.300 1015C1500 1019.500 1496 1023 1492.500 1026.700C1489 1030.500 1486 1033.500 1485 1036.700C1484 1040 1484.500 1042.500 1485.800 1045C1487.500 1048 1490 1050 1492.100 1051.250" fill="none" stroke="url(#cal)" stroke-width="2.700" stroke-linecap="round"/>
<path d="M1512.500 1005C1515.500 1010 1517.500 1013 1520 1015C1523 1019.500 1526.500 1023 1530 1026.700C1533.500 1030.500 1536.500 1033.500 1537.500 1036.700C1538.500 1040 1538 1042.500 1536.700 1045C1535 1048 1532.500 1050 1530.400 1051.250" fill="none" stroke="url(#cal)" stroke-width="2.700" stroke-linecap="round"/>
<path d="M1509.200 1004.200h4v3.200l-2 2.400l-2-2.400z" fill="#b5b5b5"/>
<path d="M1503 1015H1535.500" stroke="#bdbdbd" stroke-width="1"/><rect x="1520.800" y="1013.400" width="6.700" height="3.200" rx=".8" fill="#cfcfcf"/><circle cx="1535.600" cy="1015" r="1.300" fill="#d5d5d5"/>
<path d="M1500 1036.250H1522.400L1524.200 1050H1498.200Z" fill="#38393b"/><path d="M1500 1036.250H1522.400L1522.600 1037.800H1499.800Z" fill="#5a5b5d"/><rect x="1502.300" y="1041.800" width="17.800" height="2.300" fill="#77787a"/><rect x="1503.500" y="1039.300" width="15.400" height=".9" fill="#5c5d5f"/><rect x="1503" y="1045.800" width="16.400" height="1" fill="#5c5d5f"/>
<g fill="#c4c4c4"><rect x="1500.300" y="1050.400" width="2.800" height="8"/><rect x="1505" y="1050.400" width="2.800" height="8"/><rect x="1509.700" y="1050.400" width="2.800" height="8"/><rect x="1514.400" y="1050.400" width="2.800" height="8"/><rect x="1519" y="1050.400" width="2.800" height="8"/></g>
<g fill="#8f8f8f"><path d="M1500.300 1058.400h2.800l-1.400 3.300zM1505 1058.400h2.800l-1.400 3.300zM1509.700 1058.400h2.800l-1.400 3.300zM1514.400 1058.400h2.800l-1.400 3.300zM1519 1058.400h2.800l-1.400 3.300z"/><rect x="1500.300" y="1053" width="21.500" height=".8" opacity=".6"/><rect x="1500.300" y="1055.600" width="21.500" height=".8" opacity=".6"/></g>
<!-- Console -->
<rect x="1558" y="1000.700" width="63.300" height="55.800" rx="3.500" fill="#9ea7af"/><rect x="1559" y="1001.700" width="61.300" height="53.800" rx="2.800" fill="#050505"/><rect x="1563" y="1006" width="54.200" height="45.800" fill="#262626"/>
<clipPath id="cclip"><rect x="1563" y="1006" width="54.200" height="45.800"/></clipPath>
<g clip-path="url(#cclip)" font-family="Liberation Mono, monospace" font-weight="400" font-size="17.400" fill="#f4cf1f" stroke="#f4cf1f" stroke-width=".2" text-anchor="middle"><text y="1024.800" x="1568.800 1578.500 1588.400 1598.700 1608.700 1618.900">WARNIN</text><text y="1044" x="1562.200 1572.100 1585.400 1591.400 1598.300 1607.100">AY7:36</text></g>
<!-- AML docs -->
<rect x="1685.200" y="992.900" width="22.600" height="9" fill="url(#doc)"/><rect x="1701.600" y="993.200" width="5.200" height="6.200" fill="#5a6a80"/><rect x="1702.600" y="997.500" width="3.600" height="2" fill="#a9cfe8"/>
<path d="M1675.900 1006.600a2.200 2.200 0 0 1 2.200-2.200h5l2 4h44a2.200 2.200 0 0 1 2.200 2.200V1044.700a2.200 2.200 0 0 1-2.200 2.200H1678.100a2.200 2.200 0 0 1-2.200-2.200Z" fill="url(#fold)"/>
<path d="M1680.400 1000.400H1707.800L1726.900 1017.200V1061.300H1680.400Z" fill="url(#doc)"/><path d="M1707.800 1000.400C1710.500 1006 1710 1011 1707.500 1014.500C1714 1013 1721 1014 1726.900 1017.200Z" fill="url(#curl)"/>
<ellipse cx="1703.800" cy="1032.700" rx="18.400" ry="11.800" fill="none" stroke="#1f7ad0" stroke-width="1.700" stroke-dasharray="46 5 40 6" transform="rotate(-10 1703.800 1032.700)"/>
<path d="M1714.600 1016L1690.500 1044.800" stroke="url(#wr)" stroke-width="3.800" stroke-linecap="round"/><circle cx="1713.600" cy="1017.400" r="4.600" fill="#d4d4d4"/><path d="M1714.500 1012.500L1718.500 1016.500L1716 1019L1712.500 1015.500Z" fill="#f3f3f3"/><circle cx="1690" cy="1045.500" r="3.100" fill="#cfcfcf"/><circle cx="1690" cy="1045.500" r="1.300" fill="#f3f3f3"/>
<path d="M1705 1034L1718 1046.500" stroke="#bdbdbd" stroke-width="2.600" stroke-linecap="round"/>
<path d="M1688.200 1017.800L1703.200 1032.200" stroke="#262626" stroke-width="5.800" stroke-linecap="round"/><path d="M1687.600 1020.200L1701.200 1033.400" stroke="#5a5a5a" stroke-width="1" stroke-dasharray="1.600 1.300"/><path d="M1702.500 1031.500L1705.500 1034.500" stroke="#444" stroke-width="4.200"/>
<text x="1703.600" y="1058.900" font-family="Liberation Sans, sans-serif" font-weight="700" font-size="9.300" fill="#585858" text-anchor="middle" letter-spacing=".25">AML</text>
<!-- Trash -->
<path d="M1756.300 1003.600C1756.300 995 1808.100 995 1808.100 1003.600L1802.600 1055.300C1801.600 1063.600 1764.200 1063.600 1763.200 1055.300Z" fill="url(#tr)"/>
<path d="M1763.200 1055.300C1764.200 1063.600 1801.600 1063.600 1802.600 1055.300L1803 1051C1800 1058.500 1766 1058.500 1762.800 1051Z" fill="#5b6165" opacity=".55"/>
<ellipse cx="1782.200" cy="1003.500" rx="25.900" ry="6.500" fill="url(#trin)"/><ellipse cx="1782.200" cy="1003.500" rx="25.900" ry="6.500" fill="none" stroke="#555a5e" stroke-width=".8"/>
</svg>

</body></html>
